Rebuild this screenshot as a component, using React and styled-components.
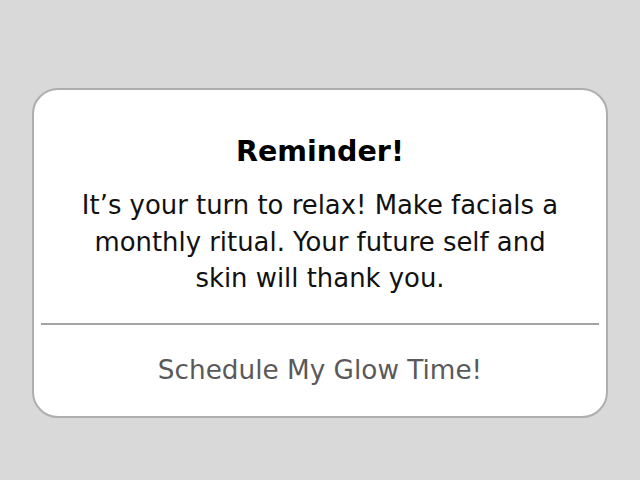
import React from 'react';
import styled, { createGlobalStyle } from 'styled-components';

const GlobalStyle = createGlobalStyle`
  html, body {
    margin: 0;
    background: #d9d9d9;
    font-family: "DejaVu Sans", "Liberation Sans", sans-serif;
  }
`;

const Page = styled.div`
  display: flex;
  justify-content: center;
  padding-top: 88px;
  height: 480px;
  box-sizing: border-box;
`;

const Card = styled.div`
  width: 576px;
  height: 330px;
  box-sizing: border-box;
  background: #fff;
  border: 2px solid #aeaeae;
  border-radius: 26px;
  display: flex;
  flex-direction: column;
  padding: 0 7px;
`;

const Body = styled.div`
  padding-top: 45px;
  text-align: center;
  height: 235px;
  box-sizing: border-box;
  border-bottom: 2px solid #a4a4a4;
`;

const Title = styled.h2`
  margin: 0 0 18px;
  font-size: 28.5px;
  font-weight: bold;
  color: #000;
  line-height: 34px;
`;

const Message = styled.p`
  margin: 0;
  font-size: 25.9px;
  line-height: 36.5px;
  color: #111;
  padding: 0 36px;
`;

const Action = styled.button`
  flex: 1;
  border: none;
  background: none;
  font-family: inherit;
  font-size: 26.3px;
  color: #5a5a5a;
  cursor: pointer;
  padding: 0 0 2px;
`;

export default function App() {
  return (
    <>
      <GlobalStyle />
      <Page>
        <Card>
          <Body>
            <Title>Reminder!</Title>
            <Message>
              It’s your turn to relax! Make facials a monthly ritual. Your future self and skin will thank you.
            </Message>
          </Body>
          <Action>Schedule My Glow Time!</Action>
        </Card>
      </Page>
    </>
  );
}
